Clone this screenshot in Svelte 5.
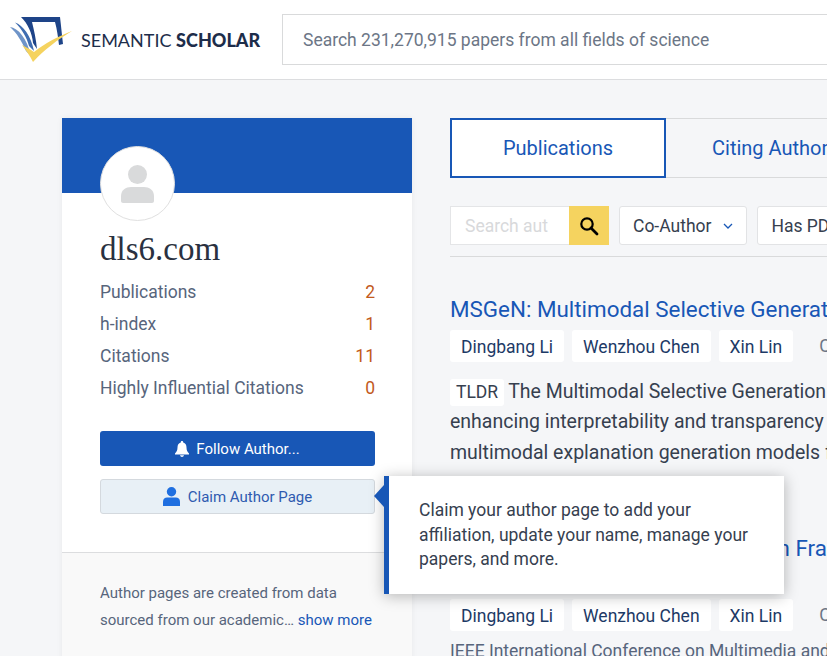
<script lang="ts">
	const stats = [
		{ label: 'Publications', value: 2 },
		{ label: 'h-index', value: 1 },
		{ label: 'Citations', value: 11 },
		{ label: 'Highly Influential Citations', value: 0 }
	];
	const authors = ['Dingbang Li', 'Wenzhou Chen', 'Xin Lin'];
</script>

<div class="page">
	<header class="header">
		<div class="brand">
			<svg class="logo" width="64" height="50" viewBox="10 14 64 50" aria-hidden="true">
				<path d="M10 26C18 27 27 37 31 55L26 50C22 41 17 32 10 26Z" fill="#6f94c8" />
				<path d="M15 21.500C23 24 31 35 34 50L29 45C27 37 22 28 15 21.500Z" fill="#3e6cb0" />
				<path d="M21 16H60C61 24 62 35 63 43L59 44C58 36 57 28 55 21H32C34 29 36 38 37 48L33 42C32 32 28 23 21 16Z" fill="#1e4488" />
				<path d="M22 44C26 46 31 49 34 51C45 42 59 35 72 30C57 39 44 49 33 61C30 55 26 49 22 44Z" fill="#f5d35f" />
			</svg>
			<span class="wordmark">SEMANTIC <b>SCHOLAR</b></span>
		</div>
		<div class="site-search">Search 231,270,915 papers from all fields of science</div>
	</header>

	<main class="main">
		<aside class="card">
			<div class="banner"></div>
			<div class="card-body">
				<div class="avatar">
					<svg width="33" height="38" viewBox="0 0 33 38" aria-hidden="true">
						<circle cx="16.500" cy="9.500" r="9.500" fill="#d9dadb" />
						<path d="M0 36V31C0 25 5 22 10 22H23C28 22 33 25 33 31V36C33 37 32 38 31 38H2C1 38 0 37 0 36Z" fill="#d9dadb" />
					</svg>
				</div>
				<h1 class="name">dls6.com</h1>
				<ul class="stats">
					{#each stats as stat}
						<li><span>{stat.label}</span><span class="value">{stat.value}</span></li>
					{/each}
				</ul>
				<button class="follow">
					<svg width="14" height="16" viewBox="0 0 14 16" aria-hidden="true">
						<path d="M7 0C6 0 5.700 .7 5.800 1.500C3.500 2 2.500 4 2.500 6.500C2.500 9.500 1.500 11 0 12.500V13.500H14V12.500C12.500 11 11.500 9.500 11.500 6.500C11.500 4 10.500 2 8.200 1.500C8.300 .7 8 0 7 0ZM5 14.300C5.300 15.400 6 16 7 16C8 16 8.700 15.400 9 14.300Z" fill="#fff" />
					</svg>
					Follow Author...
				</button>
				<div class="claim-wrap">
					<button class="claim">
						<svg width="17" height="19" viewBox="0 0 17 19" aria-hidden="true">
							<circle cx="8.500" cy="4.700" r="4.700" fill="#1f6fe0" />
							<path d="M0 19V14.500C0 12 2 10.500 4 10.500H13C15 10.500 17 12 17 14.500V19Z" fill="#1f6fe0" />
						</svg>
						Claim Author Page
					</button>
					<div class="tooltip">
						Claim your author page to add your affiliation, update your name, manage your papers, and more.
					</div>
				</div>
			</div>
			<div class="card-foot">
				Author pages are created from data sourced from our academic… <a href="#more">show more</a>
			</div>
		</aside>

		<section class="content">
			<nav class="tabs">
				<div class="tab active">Publications</div>
				<div class="tab">Citing Authors</div>
			</nav>

			<div class="filters">
				<div class="author-search">
					<div class="author-input">Search aut</div>
					<div class="author-button">
						<svg width="20" height="20" viewBox="0 0 20 20" aria-hidden="true">
							<circle cx="8" cy="8" r="5.700" fill="none" stroke="#000" stroke-width="2.200" />
							<path d="M12 12L18 18" stroke="#000" stroke-width="2.800" stroke-linecap="round" />
						</svg>
					</div>
				</div>
				<div class="select">
					Co-Author
					<svg width="10" height="6" viewBox="0 0 10 6" aria-hidden="true">
						<path d="M1 1L5 5L9 1" fill="none" stroke="#1857b6" stroke-width="1.300" />
					</svg>
				</div>
				<div class="select">Has PDF</div>
			</div>

			<article class="paper first">
				<h2 class="title">MSGeN: Multimodal Selective Generation Network for Grounded Explanations</h2>
				<div class="meta">
					{#each authors as author}
						<span class="chip">{author}</span>
					{/each}
					<span class="venue">Computer Science</span>
				</div>
				<p class="tldr">
					<span class="tldr-tag">TLDR</span>The Multimodal Selective Generation Network is introduced,<br />
					enhancing interpretability and transparency in the decision-making<br />
					multimodal explanation generation models for grounded
				</p>
			</article>

			<article class="paper second">
				<h2 class="title">GeNIE: Grounded Text Explanation Framework<br />for Multimodal Models</h2>
				<div class="meta">
					{#each authors as author}
						<span class="chip">{author}</span>
					{/each}
					<span class="venue">Computer Science</span>
				</div>
				<p class="conference">IEEE International Conference on Multimedia and Expo</p>
			</article>
		</section>
	</main>
</div>

<style>
	:global(body) {
		background: #f5f6f8;
	}

	.page {
		width: 827px;
		height: 656px;
		overflow: hidden;
		font-family: Roboto, sans-serif;
		color: #36404f;
	}

	.header {
		box-sizing: border-box;
		display: flex;
		align-items: center;
		height: 80px;
		background: #fff;
		border-bottom: 1px solid #dcdddf;
	}

	.brand {
		display: flex;
		align-items: center;
		flex: none;
		width: 282px;
		padding-left: 10px;
		box-sizing: border-box;
	}

	.logo {
		flex: none;
	}

	.wordmark {
		margin-left: 7px;
		font-family: Lato, sans-serif;
		font-size: 18px;
		color: #1d2d4a;
		white-space: nowrap;
	}

	.wordmark b {
		font-weight: 900;
	}

	.site-search {
		box-sizing: border-box;
		flex: none;
		width: 700px;
		height: 51px;
		line-height: 51px;
		padding-left: 20px;
		border: 1px solid #d9dadb;
		font-size: 17.500px;
		color: #6c7686;
		white-space: nowrap;
	}

	.main {
		display: flex;
		gap: 38px;
		padding: 38px 0 0 62px;
	}

	.card {
		flex: none;
		width: 350px;
		background: #fff;
		box-shadow: 0 0 6px rgba(0, 0, 0, 0.06);
	}

	.banner {
		height: 75px;
		background: #1857b6;
	}

	.card-body {
		padding: 0 37px 38px 38px;
	}

	.avatar {
		box-sizing: border-box;
		display: flex;
		align-items: center;
		justify-content: center;
		width: 75px;
		height: 75px;
		margin-top: -47px;
		border: 1px solid #e0e0e0;
		border-radius: 50%;
		background: #fff;
		position: relative;
	}

	.name {
		margin: 10px 0 0;
		font-family: 'Liberation Serif', serif;
		font-size: 33px;
		line-height: 37px;
		font-weight: 400;
		color: #2a3140;
	}

	.stats {
		list-style: none;
		margin: 8px 0 0;
		padding: 0;
	}

	.stats li {
		display: flex;
		justify-content: space-between;
		height: 32px;
		line-height: 32px;
		font-size: 17.500px;
		color: #57657c;
	}

	.value {
		color: #c25a1c;
	}

	.follow,
	.claim {
		display: flex;
		align-items: center;
		justify-content: center;
		width: 100%;
		padding: 0;
		font-family: Roboto, sans-serif;
		border-radius: 3px;
	}

	.follow {
		gap: 7px;
		height: 35px;
		margin-top: 27px;
		border: none;
		background: #1857b6;
		color: #fff;
		font-size: 15px;
	}

	.claim-wrap {
		position: relative;
		margin-top: 13px;
	}

	.claim {
		gap: 8px;
		height: 35px;
		border: 1px solid #d4d9de;
		background: #e8f0f6;
		color: #2f5bb0;
		font-size: 15px;
	}

	.tooltip {
		box-sizing: border-box;
		position: absolute;
		left: 284px;
		top: -3px;
		width: 400px;
		height: 118px;
		padding: 22px 30px 0 30px;
		border-left: 5px solid #1857b6;
		background: #fff;
		box-shadow: 0 2px 14px rgba(0, 0, 0, 0.28);
		font-size: 17.500px;
		line-height: 24.500px;
		color: #36404f;
	}

	.tooltip::before {
		content: '';
		position: absolute;
		left: -15px;
		top: 9px;
		border-style: solid;
		border-width: 11px 10px 11px 0;
		border-color: transparent #1857b6 transparent transparent;
	}

	.card-foot {
		padding: 27px 37px 40px 38px;
		border-top: 1px solid #dcdddf;
		background: #f9f9f9;
		font-size: 15px;
		line-height: 27px;
		color: #57657c;
	}

	.card-foot a {
		color: #1857b6;
		text-decoration: none;
	}

	.content {
		flex: none;
		width: 700px;
	}

	.tabs {
		display: flex;
		height: 60px;
		box-sizing: border-box;
		border-top: 1px solid #d9dadb;
		border-bottom: 1px solid #d9dadb;
	}

	.tab {
		box-sizing: border-box;
		padding: 0 46px;
		margin: -1px 0;
		height: 60px;
		line-height: 60px;
		font-size: 20px;
		color: #1857b6;
		white-space: nowrap;
	}

	.tab.active {
		width: 216px;
		padding: 0;
		text-align: center;
		line-height: 56px;
		border: 2px solid #1857b6;
		background: #fff;
	}

	.filters {
		display: flex;
		gap: 10px;
		height: 39px;
		margin-top: 28px;
		padding-bottom: 11px;
		border-bottom: 1px solid #d9dadb;
	}

	.author-search {
		display: flex;
		flex: none;
		width: 159px;
	}

	.author-input {
		box-sizing: border-box;
		flex: none;
		width: 119px;
		height: 39px;
		line-height: 39px;
		padding-left: 14px;
		border: 1px solid #e4e5e7;
		border-right: none;
		background: #fff;
		font-size: 17.500px;
		color: #d8d9db;
	}

	.author-button {
		display: flex;
		flex: none;
		align-items: center;
		justify-content: center;
		width: 40px;
		height: 39px;
		background: #f5d35f;
	}

	.select {
		box-sizing: border-box;
		display: flex;
		align-items: center;
		gap: 12px;
		height: 39px;
		padding: 0 13px;
		border: 1px solid #e2e3e5;
		border-radius: 3px;
		background: #fff;
		font-size: 17.500px;
		color: #36404f;
		white-space: nowrap;
	}

	.paper.first {
		margin-top: 37px;
	}

	.paper.second {
		margin-top: 65px;
	}

	.title {
		margin: 0;
		font-size: 22.400px;
		line-height: 30px;
		font-weight: 400;
		color: #1857b6;
		white-space: nowrap;
	}

	.meta {
		display: flex;
		align-items: center;
		gap: 8px;
		margin-top: 6px;
		white-space: nowrap;
	}

	.chip {
		height: 32px;
		line-height: 34px;
		padding: 0 11px;
		border-radius: 3px;
		background: #fff;
		font-size: 17.500px;
		color: #1d3a66;
	}

	.venue {
		margin-left: 18px;
		font-size: 17.500px;
		color: #6c7686;
	}

	.tldr {
		margin: 15px 0 0;
		font-size: 19.500px;
		line-height: 30.400px;
		white-space: nowrap;
	}

	.tldr-tag {
		display: inline-block;
		height: 27px;
		line-height: 27px;
		padding: 0 6px;
		margin-right: 4px;
		border-radius: 3px;
		background: #fff;
		font-size: 17.500px;
	}

	.conference {
		margin: 8px 0 0;
		font-size: 17.500px;
		line-height: 24px;
		color: #57657c;
		white-space: nowrap;
	}
</style>
